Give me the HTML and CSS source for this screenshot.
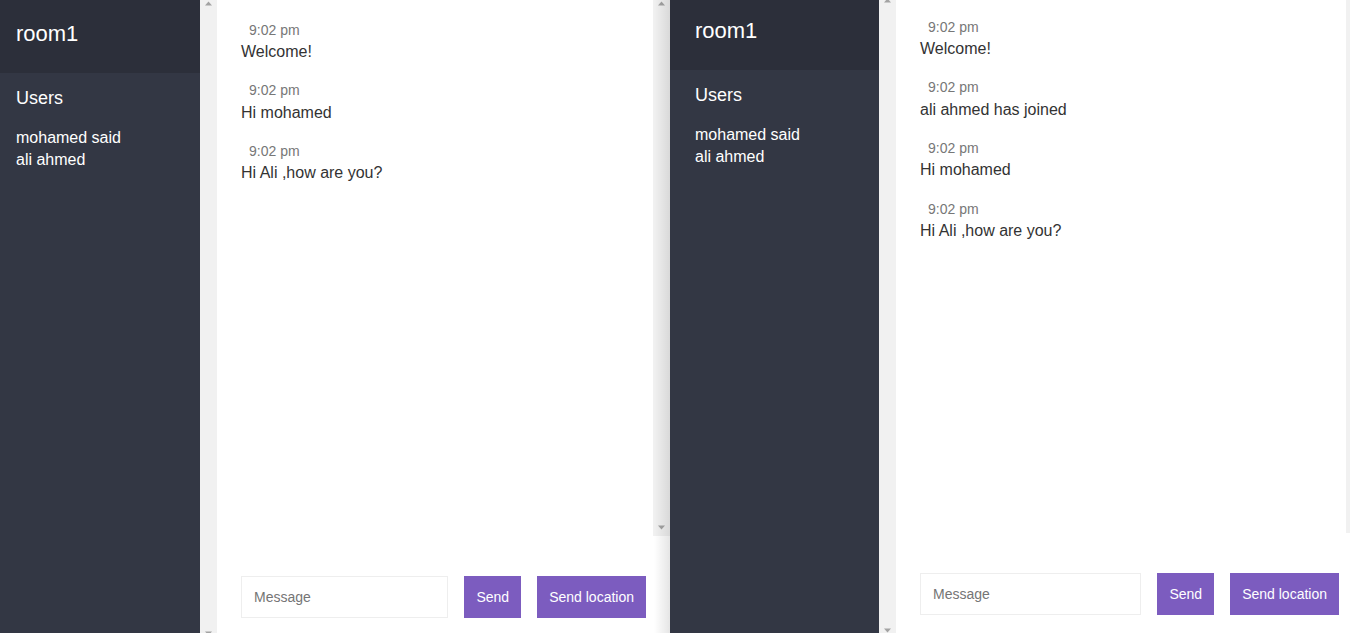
FILE: index.html
```html
<!DOCTYPE html>
<html>
<head>
<meta charset="utf-8">
<title>Chat</title>
<link rel="stylesheet" href="styles.css">
</head>
<body>
<div class="desktop">
  <div class="frame frame-left">
    <div class="app app-left">
      <aside class="sidebar">
        <div class="sidebar-body">
          <h2 class="room-title">room1</h2>
          <h3 class="list-title">Users</h3>
          <ul class="users">
            <li>mohamed said</li>
            <li>ali ahmed</li>
          </ul>
        </div>
        <div class="vscroll">
          <span class="arrow"><svg width="17" height="17" viewBox="0 0 17 17"><path d="M5 10.5h7L8.5 6.5z" fill="#a3a3a3"/></svg></span>
          <span class="arrow"><svg width="17" height="17" viewBox="0 0 17 17"><path d="M5 6.5h7L8.5 10.5z" fill="#a3a3a3"/></svg></span>
        </div>
      </aside>
      <main class="main">
        <div class="messages-wrap">
          <div class="messages">
            <div class="message">
              <p><span class="message-name"></span><span class="message-meta">9:02 pm</span></p>
              <p>Welcome!</p>
            </div>
            <div class="message">
              <p><span class="message-name"></span><span class="message-meta">9:02 pm</span></p>
              <p>Hi mohamed</p>
            </div>
            <div class="message">
              <p><span class="message-name"></span><span class="message-meta">9:02 pm</span></p>
              <p>Hi Ali ,how are you?</p>
            </div>
          </div>
          <div class="vscroll">
            <span class="arrow"><svg width="17" height="17" viewBox="0 0 17 17"><path d="M5 10.5h7L8.5 6.5z" fill="#a3a3a3"/></svg></span>
            <span class="arrow"><svg width="17" height="17" viewBox="0 0 17 17"><path d="M5 6.5h7L8.5 10.5z" fill="#a3a3a3"/></svg></span>
          </div>
        </div>
        <div class="compose">
          <form class="compose-form">
            <input class="compose-input" type="text" placeholder="Message">
            <button class="btn" type="button">Send</button>
          </form>
          <button class="btn" type="button">Send location</button>
        </div>
      </main>
    </div>
  </div>

  <div class="frame frame-right">
    <div class="app app-right">
      <aside class="sidebar">
        <div class="sidebar-body">
          <h2 class="room-title">room1</h2>
          <h3 class="list-title">Users</h3>
          <ul class="users">
            <li>mohamed said</li>
            <li>ali ahmed</li>
          </ul>
        </div>
        <div class="vscroll">
          <span class="arrow"><svg width="17" height="17" viewBox="0 0 17 17"><path d="M5 10.5h7L8.5 6.5z" fill="#a3a3a3"/></svg></span>
          <span class="arrow"><svg width="17" height="17" viewBox="0 0 17 17"><path d="M5 6.5h7L8.5 10.5z" fill="#a3a3a3"/></svg></span>
        </div>
      </aside>
      <main class="main">
        <div class="messages-wrap">
          <div class="messages">
            <div class="message">
              <p><span class="message-name"></span><span class="message-meta">9:02 pm</span></p>
              <p>Welcome!</p>
            </div>
            <div class="message">
              <p><span class="message-name"></span><span class="message-meta">9:02 pm</span></p>
              <p>ali ahmed has joined</p>
            </div>
            <div class="message">
              <p><span class="message-name"></span><span class="message-meta">9:02 pm</span></p>
              <p>Hi mohamed</p>
            </div>
            <div class="message">
              <p><span class="message-name"></span><span class="message-meta">9:02 pm</span></p>
              <p>Hi Ali ,how are you?</p>
            </div>
          </div>
          <div class="vscroll">
            <span class="arrow"><svg width="17" height="17" viewBox="0 0 17 17"><path d="M5 10.5h7L8.5 6.5z" fill="#a3a3a3"/></svg></span>
            <span class="arrow"><svg width="17" height="17" viewBox="0 0 17 17"><path d="M5 6.5h7L8.5 10.5z" fill="#a3a3a3"/></svg></span>
          </div>
        </div>
        <div class="compose">
          <form class="compose-form">
            <input class="compose-input" type="text" placeholder="Message">
            <button class="btn" type="button">Send</button>
          </form>
          <button class="btn" type="button">Send location</button>
        </div>
      </main>
    </div>
  </div>
</div>
</body>
</html>
```

FILE: styles.css
```css
* {
  margin: 0;
  padding: 0;
  box-sizing: border-box;
}

html,
body {
  width: 1350px;
  height: 633px;
  overflow: hidden;
  background: #fff;
}

body {
  font-family: "Liberation Sans", Arial, sans-serif;
  font-size: 16px;
  line-height: 1.4;
  color: #333;
}

.desktop {
  display: flex;
  height: 633px;
}

.frame {
  position: relative;
  overflow: hidden;
  height: 633px;
  flex-shrink: 0;
}

.frame-left {
  width: 670px;
}

.frame-right {
  width: 680px;
}

.frame-left::after {
  content: "";
  position: absolute;
  top: 0;
  right: 0;
  bottom: 0;
  width: 16px;
  background: linear-gradient(to right, rgba(0, 0, 0, 0), rgba(0, 0, 0, 0.1));
}

.app {
  display: flex;
  height: 647.5px;
}

.app-left {
  width: 679px;
  margin-left: -9px;
  margin-top: -5.5px;
}

.app-right {
  width: 693px;
  margin-top: -8.5px;
}

.sidebar {
  width: 226px;
  flex-shrink: 0;
  display: flex;
  background: #333744;
  color: #fff;
}

.sidebar-body {
  flex: 1;
}

.room-title {
  background: #2c2f3a;
  padding: 24px 24px 24px 25px;
  font-size: 22px;
  font-weight: normal;
}

.list-title {
  font-size: 18px;
  font-weight: normal;
  padding: 13px 24px 0 25px;
}

.users {
  list-style: none;
  padding: 16px 24px 0 25px;
  line-height: 22px;
}

.vscroll {
  width: 17px;
  flex-shrink: 0;
  background: #f1f1f1;
  display: flex;
  flex-direction: column;
  justify-content: space-between;
}

.arrow {
  display: block;
  width: 17px;
  height: 17px;
}

.arrow svg {
  display: block;
}

.main {
  flex: 1;
  min-width: 0;
  display: flex;
  flex-direction: column;
}

.messages-wrap {
  flex: 1;
  min-height: 0;
  display: flex;
}

.messages {
  flex: 1;
  padding: 24px 24px 0;
}

.message {
  margin-bottom: 16px;
}

.message-name {
  font-size: 14px;
  font-weight: bold;
  margin-right: 8px;
}

.message-meta {
  font-size: 14px;
  color: #777;
}

.compose {
  display: flex;
  flex-shrink: 0;
  margin-top: 16px;
  padding: 24px;
}

.compose-form {
  display: flex;
  flex: 1;
  margin-right: 16px;
}

.compose-input {
  flex: 1;
  min-width: 0;
  border: 1px solid #eee;
  padding: 12px;
  margin-right: 16px;
  font-family: "Liberation Sans", Arial, sans-serif;
  font-size: 14px;
  line-height: normal;
  color: #333;
  outline: none;
}

.compose-input::placeholder {
  color: #757575;
}

.btn {
  background: #7c5cbf;
  color: #fff;
  border: none;
  padding: 12px;
  font-family: "Liberation Sans", Arial, sans-serif;
  font-size: 14px;
  line-height: normal;
  cursor: pointer;
}
```
